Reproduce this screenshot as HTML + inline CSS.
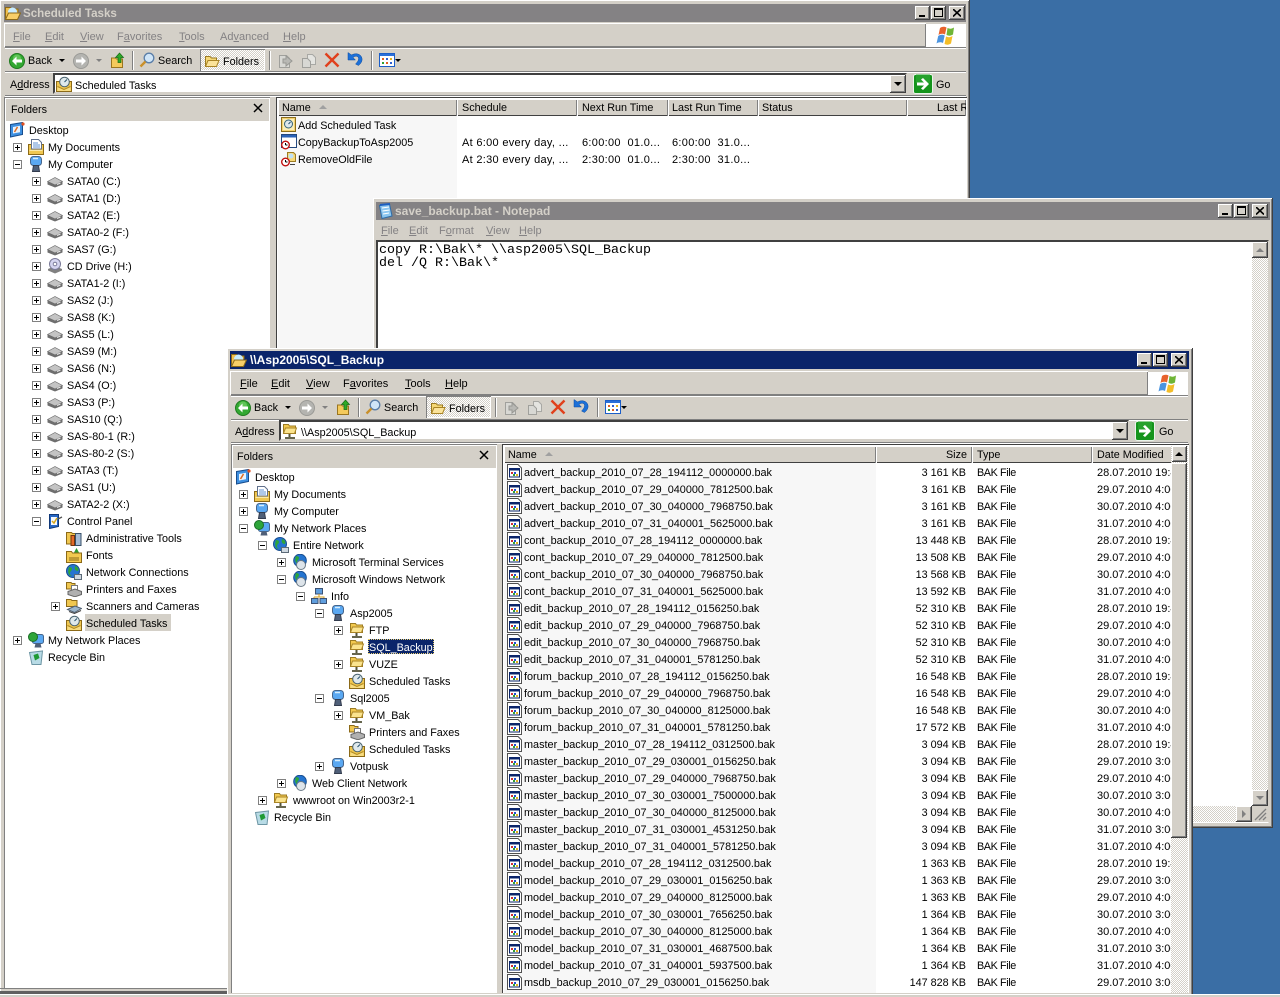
<!DOCTYPE html>
<html><head><meta charset="utf-8"><title>Scheduled Tasks</title>
<style>
html,body{margin:0;padding:0;width:1280px;height:997px;overflow:hidden;background:#3a6ea5}
body{position:relative;font:10.8px/13px "Liberation Sans",sans-serif;color:#000}
div,p,span,s,svg,b,em{position:absolute;display:block;margin:0;padding:0}
u{position:static;text-decoration:underline}
.o{left:0;top:0}
.a{background:#d4d0c8}
.fr{background:#d4d0c8;box-shadow:inset -1px -1px #404040,inset 1px 1px #fff,inset -2px -2px #808080}
.ti{left:4px;top:4px;height:18px}
.ti.in{background:#848284;color:#d4d0c8}
.ti.ac{background:#0a246a;color:#fff}
.tt{top:3px;font:bold 12px/13px "Liberation Sans",sans-serif;white-space:nowrap}
.btn{background:#d4d0c8;box-shadow:inset -1px -1px #404040,inset 1px 1px #fff,inset -2px -2px #808080}
.t{white-space:nowrap}
.m{font-size:11px}
.g{color:#848284}
.sc{font-size:11px;letter-spacing:.3px}
.hl{background:#808080;height:1px}
.wl{background:#fff;height:1px}
.vs{width:1px;background:#808080;box-shadow:1px 0 #fff}
svg{width:16px;height:16px;overflow:hidden}
.n{height:17px;width:1px}
.n s{left:-4px;top:4px;width:9px;height:9px;box-sizing:border-box;border:1px solid #808080;background:#fff}
.n s:before{content:"";position:absolute;left:1px;top:3px;width:5px;height:1px;background:#000}
.n s.p:after{content:"";position:absolute;left:3px;top:1px;width:1px;height:5px;background:#000}
.n svg{left:11px;top:0}
.n span{left:31px;top:3px;white-space:nowrap}
.c{top:99px;height:17px;background:#d4d0c8;box-shadow:inset 1px 1px #fff,inset -1px 0 #808080,inset 0 -1px #404040;overflow:hidden}
.c span{top:3px;white-space:nowrap}
.r{position:relative;height:17px;width:690px}
.r svg{left:3px;top:0;width:15px;height:16px}
.r span{top:3px;white-space:nowrap}
.nm{left:20px;font-size:10.87px}
.sz{left:362px;width:100px;text-align:right}
.ty{left:473px;letter-spacing:-.4px}
.dt{left:593px;width:74px;overflow:hidden;font-size:11px}
.ch{background:repeating-conic-gradient(#fff 0 25%,#d4d0c8 0 50%) 0 0/2px 2px}
.tri{border-style:solid;border-color:transparent;width:0;height:0}
</style></head><body>
<svg width="0" height="0" style="left:0;top:0;width:0;height:0">
<defs>
<symbol id="fopen" viewBox="0 0 16 16"><path d="M1.500 13.500V3.500h4.500l1.500 1.500h5v2.500" fill="#f6d876" stroke="#9c7b22"/><path d="M1.500 13.500l2.500-6h11l-2.500 6z" fill="#fbe39a" stroke="#a98426"/></symbol>
<symbol id="ftitle" viewBox="0 0 16 16"><path d="M.5 13.500V2.500h5l1.500 1.500h6v3" fill="#f0c050" stroke="#8c6a18"/><circle cx="7.500" cy="7" r="4.500" fill="#c8ecff"/><path d="M.5 14.500l3-6.500h12l-3 6.500z" fill="#f8cf68" stroke="#8c6a18"/></symbol>
<symbol id="net" viewBox="0 0 16 16"><path d="M1.500 10.500V1.500h5l1 1.500h6v7.500z" fill="#f2c94f" stroke="#9c7b22"/><path d="M1.500 10.500l2-5.500h11l-2 5.500z" fill="#fbe48e" stroke="#a98426"/><path d="M7.500 11v3" stroke="#55553a" stroke-width="2"/><path d="M3 15h10" stroke="#55553a" stroke-width="1.800"/></symbol>
<symbol id="task" viewBox="0 0 16 16"><path d="M.5 15.500V5.500h15v10z" fill="#f0c750" stroke="#8c6a18"/><circle cx="8.500" cy="6" r="4.800" fill="#dfe9ec" stroke="#4c6571"/><path d="M8.500 6l2.500-2.500" stroke="#27506e"/><path d="M1.500 11l6 3 7-3v4h-13z" fill="#f8dc80"/><path d="M1.500 10.500l6.500 3 6.500-3" fill="none" stroke="#b08a24"/></symbol>
<symbol id="desk" viewBox="0 0 16 16"><path d="M1.500 2.500l12-2v12l-12 2.500z" fill="#3d8fe0" stroke="#174c8c"/><path d="M4 5l7-1.200v6.500L4 11.500z" fill="#e8f2fc"/><path d="M5.500 10l3-5" stroke="#e06a20" stroke-width="1.500"/><circle cx="14" cy="2" r="1.600" fill="#e05020"/></symbol>
<symbol id="docs" viewBox="0 0 16 16"><path d="M.5 15.500V5.500h15v10z" fill="#f0c750" stroke="#8c6a18"/><path d="M3.500 10V.5h7l3 3V10z" fill="#fff" stroke="#60708c"/><path d="M5 4h5M5 6h7M5 8h7" stroke="#5f90d0"/><path d="M1.500 11h13v1h-13z" fill="#fbe9a8"/></symbol>
<symbol id="pc" viewBox="0 0 16 16"><rect x="2.500" y=".5" width="11" height="9" rx="3" fill="#5aa8f2" stroke="#45658c"/><path d="M5 2.500h5" stroke="#d8eefd" stroke-width="1.500"/><path d="M5.500 9.500h5l1 6h-7z" fill="#4f5f78" stroke="#333c4e"/></symbol>
<symbol id="drv" viewBox="0 0 16 16"><path d="M.5 9l7.500-3.500L15.500 9v2.500l-7.500 3-7.500-3z" fill="#6e6e6e"/><path d="M.5 8.500L8 4.500l7.500 4L8 12z" fill="#c4c4c4" stroke="#6e6e6e" stroke-width=".7"/><path d="M10 11.500l3.500-1.500" stroke="#e8e8e8"/></symbol>
<symbol id="cd" viewBox="0 0 16 16"><path d="M1 11l7-3 7 3v1.500l-7 3-7-3z" fill="#808080"/><circle cx="8" cy="6" r="5.500" fill="#d4d4f0" stroke="#7a7a98"/><circle cx="8" cy="6" r="1.800" fill="#fff" stroke="#7a7a98"/></symbol>
<symbol id="cp" viewBox="0 0 16 16"><path d="M2.500 1.500h9v12l-9 2z" fill="#2666c4" stroke="#103878"/><path d="M4 4h6v8H4z" fill="#f4f8fd"/><path d="M5 8l2 2 3-5" stroke="#d8a81c" stroke-width="1.500" fill="none"/><path d="M11 6l4-2" stroke="#555" stroke-width="1.300"/></symbol>
<symbol id="adm" viewBox="0 0 16 16"><path d="M.5 14V2.500h5l1 1h8V14z" fill="#f0c750" stroke="#8c6a18"/><rect x="5" y="5.500" width="3.500" height="10" fill="#e46a28" stroke="#70340e"/><rect x="9.500" y="3.500" width="5.500" height="12" fill="#a6bcd4" stroke="#38506a"/></symbol>
<symbol id="fnt" viewBox="0 0 16 16"><path d="M.5 15.500V4.500h5l1 1.500h9v9.500z" fill="#f2c94f" stroke="#8c6a18"/><path d="M3 11h10M3 13h10" stroke="#8c6a18"/><path d="M10.500 1l2.500 4.500H8z" fill="#2f9b2f"/></symbol>
<symbol id="glb" viewBox="0 0 16 16"><circle cx="7" cy="7" r="6.500" fill="#2474d0" stroke="#1a4f90"/><path d="M3 3c3 0 4 2 2 4s-1 4 1 5c-3 0-5-3-3-9zM9 2c3 1 4 3 3 5-2 0-4-1-3-5z" fill="#2ea53a"/><path d="M8.500 10.500h7v5h-7z" fill="#cfd8e0" stroke="#5c6a78"/></symbol>
<symbol id="prn" viewBox="0 0 16 16"><path d="M.5 8V1.500h4.500l1 1h3V8z" fill="#f0c750" stroke="#8c6a18"/><path d="M5.500 4.500h6v6h-6z" fill="#fff" stroke="#777"/><path d="M2 10.500l7-2.500 6.500 2.500v3L9 15.800l-7-2.300z" fill="#b0b0b0" stroke="#666"/></symbol>
<symbol id="scn" viewBox="0 0 16 16"><path d="M.5 8.500V1.500h4.500l1 1h5v6z" fill="#f0c750" stroke="#8c6a18"/><path d="M1.500 11.500l7.500-3.500 6.500 2.500-7 4z" fill="#9cb6cc" stroke="#4f6072"/><path d="M3 13.500l5.500 2 6.500-3" stroke="#444" fill="none"/></symbol>
<symbol id="npl" viewBox="0 0 16 16"><rect x="4.500" y="2.500" width="11" height="9" rx="2" fill="#5aa8f2" stroke="#45658c"/><circle cx="5" cy="5" r="4.500" fill="#2ea53a" stroke="#1b6e27"/><path d="M7.500 11.500h5l1 4h-7z" fill="#4f5f78"/></symbol>
<symbol id="rec" viewBox="0 0 16 16"><path d="M1.500 3.500l13-1.500-1.500 13.500h-9z" fill="#b8dbe6" stroke="#6d96a4"/><path d="M5.500 6l4.500-1.500 1.500 4.500-4.500 2.500z" fill="#1f9a34"/></symbol>
<symbol id="wg" viewBox="0 0 16 16"><rect x="4.500" y=".5" width="7" height="5.500" fill="#5f9ede" stroke="#3c5172"/><path d="M8 6v3M3 9h10v2M3 9v2" stroke="#d9a21f" fill="none"/><rect x=".5" y="10.500" width="6.500" height="5" fill="#5f9ede" stroke="#3c5172"/><rect x="9" y="10.500" width="6.500" height="5" fill="#5f9ede" stroke="#3c5172"/></symbol>
<symbol id="wcn" viewBox="0 0 16 16"><circle cx="8" cy="6.500" r="6.300" fill="#2474d0" stroke="#1a4f90"/><path d="M4 2c3 0 4 2 2 4s-1 3 1 4c-3 0-5-3-3-8z" fill="#2ea53a"/><ellipse cx="9" cy="11" rx="4.500" ry="4.500" fill="#dde4ea" stroke="#6c7b88"/></symbol>
<symbol id="bak" viewBox="0 0 15 16"><path d="M.5.500h10.500l3.500 3.500v11.500H.5z" fill="#fff" stroke="#505050"/><rect x="2.500" y="4.500" width="10" height="8.500" fill="#fff" stroke="#0a246a"/><rect x="2" y="4" width="11" height="2.500" fill="#0a246a"/><rect x="4" y="8" width="2" height="2" fill="#d03030"/><rect x="7" y="8" width="2" height="2" fill="#2050d0"/><rect x="6" y="10" width="2" height="2" fill="#30a030"/><rect x="9" y="10" width="2" height="2" fill="#e0b020"/></symbol>
<symbol id="jobnew" viewBox="0 0 16 16"><path d="M.5 1.500h14v14H.5z" fill="#f3d271" stroke="#8b6d1a"/><rect x="2" y="3" width="11" height="11" fill="#fbeeb8"/><circle cx="7.500" cy="8" r="4" fill="#dde8ec" stroke="#33627a"/><path d="M7.500 8l2-2" stroke="#27506e"/></symbol>
<symbol id="job" viewBox="0 0 16 16"><rect x=".5" y=".5" width="15" height="13" fill="#fff" stroke="#23487e"/><rect x="1" y="1" width="14" height="2.500" fill="#2a62b8"/><circle cx="4.500" cy="11" r="3.800" fill="#fff" stroke="#c01010" stroke-width="1.400"/><path d="M4.500 11V9M4.500 11h2" stroke="#000"/></symbol>
<symbol id="job2" viewBox="0 0 16 16"><path d="M6.500 1.500h6l2 2v7h-8z" fill="#f6d876" stroke="#9c7b22"/><circle cx="10" cy="5" r="2.500" fill="#bfe0f5"/><path d="M9 13.500h5" stroke="#404040"/><circle cx="4.500" cy="11" r="3.800" fill="#fff" stroke="#c01010" stroke-width="1.400"/><path d="M4.500 11V9M4.500 11h2" stroke="#000"/></symbol>
<symbol id="back" viewBox="0 0 16 16"><circle cx="8" cy="8" r="7.500" fill="#33a832" stroke="#1f7a1f"/><circle cx="8" cy="5.500" r="4" fill="#7fd870" opacity=".6"/><path d="M3 8l4.500-4.500V6.500H13v3H7.500v3z" fill="#fff"/></symbol>
<symbol id="fwd" viewBox="0 0 16 16"><circle cx="8" cy="8" r="7.500" fill="#b4b4b0" stroke="#9a9a96"/><path d="M13 8L8.500 3.500V6.500H3v3h5.500v3z" fill="#fff"/></symbol>
<symbol id="up" viewBox="0 0 16 16"><path d="M1.500 15.500V6h4l1 1h6v8.500z" fill="#f4ca5c" stroke="#9a7520"/><path d="M9.500 1l4 4.500H11v5H8v-5H5.500z" fill="#2eaa28" stroke="#156b12" stroke-width=".7"/></symbol>
<symbol id="srch" viewBox="0 0 16 16"><circle cx="10" cy="6" r="4.800" fill="#cfe5f8" stroke="#5a7ea8" stroke-width="1.300"/><path d="M1.500 14.500l5-5" stroke="#c9902a" stroke-width="2.400"/></symbol>
<symbol id="mv" viewBox="0 0 16 16"><path d="M2.500 2.500h7l3 3v9h-10z" fill="#d8d8d4" stroke="#a0a09c"/><path d="M6 6h3V3l6 5-6 5v-3H6z" fill="#b8b8b4" stroke="#989894"/></symbol>
<symbol id="cpy" viewBox="0 0 16 16"><path d="M6.500 1.500h5l3 3v7h-8z" fill="#e4e4e0" stroke="#a8a8a4"/><path d="M1.500 5.500h5l3 3v6h-8z" fill="#d8d8d4" stroke="#a0a09c"/></symbol>
<symbol id="del" viewBox="0 0 16 16"><path d="M1.500 1.500L14.500 14.500M14.500 1.500L1.500 14.500" stroke="#e0401c" stroke-width="2.400"/></symbol>
<symbol id="und" viewBox="0 0 16 16"><path d="M1 1.500v7.500h7.500L6 6.500C8 4.500 11 5 11.500 7c.4 2-1 4-3 6l3 1.500c3-2.500 4.500-5.500 3-8.500C13 2.500 8 1.800 4.500 4z" fill="#1c70d8" stroke="#0e4a9c" stroke-width=".5"/></symbol>
<symbol id="vw" viewBox="0 0 16 16"><rect x=".5" y="1.500" width="15" height="13" fill="#fff" stroke="#1c5ec8"/><rect x="1" y="2" width="14" height="2" fill="#2a6fd8"/><path d="M3 6h2v2H3z" fill="#e06020"/><path d="M7 6h2v2H7z" fill="#3060d0"/><path d="M11 6h2v2h-2z" fill="#e0b020"/><path d="M3 10h2v2H3z" fill="#30a030"/><path d="M7 10h2v2H7z" fill="#e06020"/><path d="M11 10h2v2h-2z" fill="#3060d0"/></symbol>
<symbol id="flag" viewBox="0 0 24 24"><path d="M5 4c2.500-1.500 4-1.500 6.500-.5L10 10.500c-2.500-1-4-1-6.500.5z" fill="#e8622c"/><path d="M12.500 4c2.500 1 4 1 6.500-.5L18 10.500c-2.500 1.500-4 1.500-6.500.5z" fill="#6fb536"/><path d="M3.200 12c2.500-1.500 4-1.500 6.500-.5L8 19c-2.500-1-4-1-6.500.5z" fill="#4b94e0"/><path d="M11 12.500c2.500 1 4 1 6.500-.5L16 19.500c-2.500 1.500-4 1.500-6.500.5z" fill="#f4bd28"/></symbol>
<symbol id="go" viewBox="0 0 20 20"><rect x=".5" y=".5" width="19" height="19" rx="2" fill="#15941c" stroke="#eaf4ea"/><path d="M3 0h14v9H3z" fill="#36b03c" opacity=".5"/><path d="M4 8.500h7L8 5.500 10 4l6 6-6 6-2-1.500 3-3H4z" fill="#fff"/></symbol>
<symbol id="np" viewBox="0 0 16 16"><path d="M1.500 2.500l10-1.500 2.500 12-10 2.500z" fill="#8cc6f0" stroke="#2f6ca8"/><path d="M2 2l10-1" stroke="#1c5ec0" stroke-width="2"/><path d="M4 5l7-1M4.500 8l7-1M5 11l6-1" stroke="#fff"/></symbol>
</defs></svg>

<!-- WINDOW 1 -->
<div class="o">
<div class="fr" style="left:0;top:0;width:970px;height:995px"></div>
<div class="ti in" style="width:962px"><svg style="left:1px;top:1px"><use href="#ftitle"/></svg><span class="tt" style="left:19px;font-size:11.6px">Scheduled Tasks</span></div>
<div class="btn" style="left:915px;top:6px;width:15px;height:14px"><b style="left:4px;top:9px;width:6px;height:2px;background:#000"></b></div>
<div class="btn" style="left:931px;top:6px;width:15px;height:14px"><b style="left:3px;top:2px;width:7px;height:6px;border:1px solid #000;border-top-width:2px"></b></div>
<div class="btn" style="left:949px;top:6px;width:16px;height:14px"><svg style="left:4px;top:3px;width:8px;height:8px" viewBox="0 0 8 8"><path d="M0 0l8 7.500M8 0L0 7.500" stroke="#000" stroke-width="1.600"/></svg></div>

<div style="left:4px;top:23px;width:922px;height:24px;box-shadow:inset 1px 1px #fff,inset -1px -1px #808080"></div>
<div style="left:926px;top:24px;width:40px;height:23px;background:#fff"><svg style="left:9px;top:0;width:24px;height:24px"><use href="#flag"/></svg></div>
<p class="t g m" style="left:13px;top:31px"><u>F</u>ile</p>
<p class="t g m" style="left:45px;top:31px"><u>E</u>dit</p>
<p class="t g m" style="left:80px;top:31px"><u>V</u>iew</p>
<p class="t g m" style="left:117px;top:31px">F<u>a</u>vorites</p>
<p class="t g m" style="left:179px;top:31px"><u>T</u>ools</p>
<p class="t g m" style="left:220px;top:31px">Ad<u>v</u>anced</p>
<p class="t g m" style="left:283px;top:31px"><u>H</u>elp</p>

<div class="hl" style="left:5px;top:47px;width:961px"></div><div class="wl" style="left:5px;top:48px;width:961px"></div>
<svg style="left:9px;top:53px"><use href="#back"/></svg><p class="t" style="left:28px;top:55px">Back</p>
<div class="tri" style="left:59px;top:59px;border-width:3px 3px 0;border-top-color:#000"></div>
<svg style="left:73px;top:53px"><use href="#fwd"/></svg>
<div class="tri" style="left:96px;top:59px;border-width:3px 3px 0;border-top-color:#808080"></div>
<svg style="left:110px;top:52px"><use href="#up"/></svg>
<div class="vs" style="left:132px;top:51px;height:19px"></div>
<svg style="left:139px;top:52px"><use href="#srch"/></svg><p class="t" style="left:158px;top:55px">Search</p>
<div class="ch" style="left:200px;top:49px;width:65px;height:22px;box-shadow:inset 1px 1px #808080,inset -1px -1px #fff"></div>
<svg style="left:204px;top:53px"><use href="#fopen"/></svg><p class="t" style="left:223px;top:56px">Folders</p>
<div class="vs" style="left:269px;top:51px;height:19px"></div>
<svg style="left:277px;top:53px"><use href="#mv"/></svg><svg style="left:301px;top:53px"><use href="#cpy"/></svg>
<svg style="left:324px;top:52px"><use href="#del"/></svg><svg style="left:347px;top:51px"><use href="#und"/></svg>
<div class="vs" style="left:371px;top:51px;height:19px"></div>
<svg style="left:379px;top:52px"><use href="#vw"/></svg>
<div class="tri" style="left:395px;top:59px;border-width:3px 3px 0;border-top-color:#000"></div>

<div class="hl" style="left:5px;top:71px;width:961px"></div><div class="wl" style="left:5px;top:72px;width:961px"></div>
<p class="t" style="left:10px;top:79px">A<u>d</u>dress</p>
<div style="left:53px;top:73px;width:854px;height:21px;box-sizing:border-box;background:#fff;border:2px solid #404040;border-right-color:#d4d0c8;border-bottom-color:#d4d0c8"></div>
<svg style="left:56px;top:76px"><use href="#task"/></svg><p class="t" style="left:75px;top:80px">Scheduled Tasks</p>
<div class="btn" style="left:890px;top:75px;width:16px;height:18px"><div class="tri" style="left:4px;top:7px;border-width:4px 4px 0;border-top-color:#000"></div></div>
<svg style="left:913px;top:74px;width:20px;height:20px"><use href="#go"/></svg><p class="t" style="left:936px;top:79px">Go</p>
<div class="hl" style="left:5px;top:95px;width:961px"></div><div class="wl" style="left:5px;top:96px;width:961px"></div>

<!-- folders pane -->
<div style="left:4px;top:97px;width:266px;height:892px;background:#fff;box-shadow:inset 1px 1px #808080"></div>
<div class="a" style="left:5px;top:98px;width:264px;height:23px;box-shadow:inset 1px 1px #fff"></div>
<p class="t" style="left:11px;top:104px">Folders</p>
<svg style="left:253px;top:103px;width:10px;height:10px" viewBox="0 0 10 10"><path d="M1 1l8 8M9 1L1 9" stroke="#000" stroke-width="1.500"/></svg>
<div class="hl" style="left:0;top:988px;width:230px"></div>
<div style="left:0;top:991px;width:230px;height:3px;background:#606060"></div>

<div class="n" style="left:-2px;top:122px"><svg><use href="#desk"/></svg><span>Desktop</span></div>
<div class="n" style="left:17px;top:139px"><s class="p"></s><svg><use href="#docs"/></svg><span>My Documents</span></div>
<div class="n" style="left:17px;top:156px"><s></s><svg><use href="#pc"/></svg><span>My Computer</span></div>
<div class="n" style="left:36px;top:173px"><s class="p"></s><svg><use href="#drv"/></svg><span>SATA0 (C:)</span></div>
<div class="n" style="left:36px;top:190px"><s class="p"></s><svg><use href="#drv"/></svg><span>SATA1 (D:)</span></div>
<div class="n" style="left:36px;top:207px"><s class="p"></s><svg><use href="#drv"/></svg><span>SATA2 (E:)</span></div>
<div class="n" style="left:36px;top:224px"><s class="p"></s><svg><use href="#drv"/></svg><span>SATA0-2 (F:)</span></div>
<div class="n" style="left:36px;top:241px"><s class="p"></s><svg><use href="#drv"/></svg><span>SAS7 (G:)</span></div>
<div class="n" style="left:36px;top:258px"><s class="p"></s><svg><use href="#cd"/></svg><span>CD Drive (H:)</span></div>
<div class="n" style="left:36px;top:275px"><s class="p"></s><svg><use href="#drv"/></svg><span>SATA1-2 (I:)</span></div>
<div class="n" style="left:36px;top:292px"><s class="p"></s><svg><use href="#drv"/></svg><span>SAS2 (J:)</span></div>
<div class="n" style="left:36px;top:309px"><s class="p"></s><svg><use href="#drv"/></svg><span>SAS8 (K:)</span></div>
<div class="n" style="left:36px;top:326px"><s class="p"></s><svg><use href="#drv"/></svg><span>SAS5 (L:)</span></div>
<div class="n" style="left:36px;top:343px"><s class="p"></s><svg><use href="#drv"/></svg><span>SAS9 (M:)</span></div>
<div class="n" style="left:36px;top:360px"><s class="p"></s><svg><use href="#drv"/></svg><span>SAS6 (N:)</span></div>
<div class="n" style="left:36px;top:377px"><s class="p"></s><svg><use href="#drv"/></svg><span>SAS4 (O:)</span></div>
<div class="n" style="left:36px;top:394px"><s class="p"></s><svg><use href="#drv"/></svg><span>SAS3 (P:)</span></div>
<div class="n" style="left:36px;top:411px"><s class="p"></s><svg><use href="#drv"/></svg><span>SAS10 (Q:)</span></div>
<div class="n" style="left:36px;top:428px"><s class="p"></s><svg><use href="#drv"/></svg><span>SAS-80-1 (R:)</span></div>
<div class="n" style="left:36px;top:445px"><s class="p"></s><svg><use href="#drv"/></svg><span>SAS-80-2 (S:)</span></div>
<div class="n" style="left:36px;top:462px"><s class="p"></s><svg><use href="#drv"/></svg><span>SATA3 (T:)</span></div>
<div class="n" style="left:36px;top:479px"><s class="p"></s><svg><use href="#drv"/></svg><span>SAS1 (U:)</span></div>
<div class="n" style="left:36px;top:496px"><s class="p"></s><svg><use href="#drv"/></svg><span>SATA2-2 (X:)</span></div>
<div class="n" style="left:36px;top:513px"><s></s><svg><use href="#cp"/></svg><span>Control Panel</span></div>
<div class="n" style="left:55px;top:530px"><svg><use href="#adm"/></svg><span>Administrative Tools</span></div>
<div class="n" style="left:55px;top:547px"><svg><use href="#fnt"/></svg><span>Fonts</span></div>
<div class="n" style="left:55px;top:564px"><svg><use href="#glb"/></svg><span>Network Connections</span></div>
<div class="n" style="left:55px;top:581px"><svg><use href="#prn"/></svg><span>Printers and Faxes</span></div>
<div class="n" style="left:55px;top:598px"><s class="p"></s><svg><use href="#scn"/></svg><span>Scanners and Cameras</span></div>
<div class="a" style="left:85px;top:614px;width:86px;height:17px"></div>
<div class="n" style="left:55px;top:615px"><svg><use href="#task"/></svg><span>Scheduled Tasks</span></div>
<div class="n" style="left:17px;top:632px"><s class="p"></s><svg><use href="#npl"/></svg><span>My Network Places</span></div>
<div class="n" style="left:17px;top:649px"><svg><use href="#rec"/></svg><span>Recycle Bin</span></div>

<!-- list pane -->
<div style="left:276px;top:97px;width:691px;height:892px;background:#fff;box-shadow:inset 1px 1px #404040"></div>
<div style="left:278px;top:99px;width:179px;height:880px;background:#f7f7f7"></div>
<div class="c" style="left:278px;width:179px"><span style="left:4px">Name</span><div class="tri" style="left:41px;top:6px;border-width:0 4px 4px;border-bottom-color:#a0a0a0"></div></div>
<div class="c" style="left:457px;width:120px"><span style="left:5px">Schedule</span></div>
<div class="c" style="left:577px;width:91px"><span style="left:5px">Next Run Time</span></div>
<div class="c" style="left:668px;width:90px"><span style="left:4px">Last Run Time</span></div>
<div class="c" style="left:758px;width:149px"><span style="left:4px">Status</span></div>
<div class="c" style="left:907px;width:59px"><span style="left:30px">Last Run Result</span></div>
<svg style="left:281px;top:116px"><use href="#jobnew"/></svg><p class="t" style="left:298px;top:120px">Add Scheduled Task</p>
<svg style="left:281px;top:134px"><use href="#job"/></svg><p class="t" style="left:298px;top:137px">CopyBackupToAsp2005</p>
<svg style="left:281px;top:151px"><use href="#job2"/></svg><p class="t" style="left:298px;top:154px">RemoveOldFile</p>
<p class="t sc" style="left:462px;top:137px">At 6:00 every day, ...</p><p class="t sc" style="left:582px;top:137px">6:00:00&nbsp; 01.0...</p><p class="t sc" style="left:672px;top:137px">6:00:00&nbsp; 31.0...</p>
<p class="t sc" style="left:462px;top:154px">At 2:30 every day, ...</p><p class="t sc" style="left:582px;top:154px">2:30:00&nbsp; 01.0...</p><p class="t sc" style="left:672px;top:154px">2:30:00&nbsp; 31.0...</p>
</div>

<!-- NOTEPAD -->
<div class="fr" style="left:373px;top:198px;width:900px;height:630px"></div>
<div class="ti in" style="left:376px;top:202px;width:894px"><svg style="left:2px;top:1px"><use href="#np"/></svg><span class="tt" style="left:19px">save_backup.bat - Notepad</span></div>
<div class="btn" style="left:1218px;top:204px;width:15px;height:14px"><b style="left:4px;top:9px;width:6px;height:2px;background:#000"></b></div>
<div class="btn" style="left:1234px;top:204px;width:15px;height:14px"><b style="left:3px;top:2px;width:7px;height:6px;border:1px solid #000;border-top-width:2px"></b></div>
<div class="btn" style="left:1252px;top:204px;width:16px;height:14px"><svg style="left:4px;top:3px;width:8px;height:8px" viewBox="0 0 8 8"><path d="M0 0l8 7.500M8 0L0 7.500" stroke="#000" stroke-width="1.600"/></svg></div>
<p class="t g m" style="left:381px;top:225px"><u>F</u>ile</p>
<p class="t g m" style="left:409px;top:225px"><u>E</u>dit</p>
<p class="t g m" style="left:439px;top:225px">F<u>o</u>rmat</p>
<p class="t g m" style="left:486px;top:225px"><u>V</u>iew</p>
<p class="t g m" style="left:519px;top:225px"><u>H</u>elp</p>
<div style="left:376px;top:240px;width:893px;height:583px;box-sizing:border-box;background:#fff;border:2px solid #404040;border-right-color:#d4d0c8;border-bottom-color:#fff"></div>
<pre style="position:absolute;left:379px;top:244px;margin:0;font:13.330px/13px 'Liberation Mono',monospace">copy R:\Bak\* \\asp2005\SQL_Backup
del /Q R:\Bak\*</pre>
<div class="ch" style="left:1252px;top:258px;width:16px;height:532px"></div>
<div class="btn" style="left:1252px;top:242px;width:16px;height:16px"><div class="tri" style="left:4px;top:6px;border-width:0 4px 4px;border-bottom-color:#808080"></div></div>
<div class="btn" style="left:1252px;top:790px;width:16px;height:16px"><div class="tri" style="left:4px;top:6px;border-width:4px 4px 0;border-top-color:#808080"></div></div>
<div class="ch" style="left:378px;top:806px;width:858px;height:16px"></div>
<div class="btn" style="left:1236px;top:806px;width:16px;height:16px"><div class="tri" style="left:6px;top:4px;border-width:4px 0 4px 4px;border-left-color:#808080"></div></div>
<div class="a" style="left:1252px;top:806px;width:16px;height:16px"><svg style="left:2px;top:2px;width:14px;height:14px" viewBox="0 0 14 14"><path d="M1 12L12 1M5 12L12 5M9 12L12 9" stroke="#808080" stroke-width="1.300"/></svg></div>

<!-- WINDOW 3 -->
<div class="o" style="left:226px;top:347px">
<div class="fr" style="left:1px;top:1px;width:966px;height:648px"></div>
<div class="ti ac" style="width:959px"><svg style="left:1px;top:1px"><use href="#ftitle"/></svg><span class="tt" style="left:20px">\\Asp2005\SQL_Backup</span></div>
<div class="btn" style="left:911px;top:6px;width:15px;height:14px"><b style="left:4px;top:9px;width:6px;height:2px;background:#000"></b></div>
<div class="btn" style="left:927px;top:6px;width:15px;height:14px"><b style="left:3px;top:2px;width:7px;height:6px;border:1px solid #000;border-top-width:2px"></b></div>
<div class="btn" style="left:945px;top:6px;width:16px;height:14px"><svg style="left:4px;top:3px;width:8px;height:8px" viewBox="0 0 8 8"><path d="M0 0l8 7.500M8 0L0 7.500" stroke="#000" stroke-width="1.600"/></svg></div>

<div style="left:4px;top:24px;width:918px;height:24px;box-shadow:inset 1px 1px #fff,inset -1px -1px #808080"></div>
<div style="left:922px;top:25px;width:40px;height:23px;background:#fff"><svg style="left:9px;top:0;width:24px;height:24px"><use href="#flag"/></svg></div>
<p class="t m" style="left:14px;top:31px"><u>F</u>ile</p>
<p class="t m" style="left:45px;top:31px"><u>E</u>dit</p>
<p class="t m" style="left:80px;top:31px"><u>V</u>iew</p>
<p class="t m" style="left:117px;top:31px">F<u>a</u>vorites</p>
<p class="t m" style="left:179px;top:31px"><u>T</u>ools</p>
<p class="t m" style="left:219px;top:31px"><u>H</u>elp</p>

<div class="hl" style="left:5px;top:48px;width:957px"></div><div class="wl" style="left:5px;top:49px;width:957px"></div>
<svg style="left:9px;top:53px"><use href="#back"/></svg><p class="t" style="left:28px;top:55px">Back</p>
<div class="tri" style="left:59px;top:59px;border-width:3px 3px 0;border-top-color:#000"></div>
<svg style="left:73px;top:53px"><use href="#fwd"/></svg>
<div class="tri" style="left:96px;top:59px;border-width:3px 3px 0;border-top-color:#808080"></div>
<svg style="left:110px;top:52px"><use href="#up"/></svg>
<div class="vs" style="left:132px;top:51px;height:19px"></div>
<svg style="left:139px;top:52px"><use href="#srch"/></svg><p class="t" style="left:158px;top:55px">Search</p>
<div class="ch" style="left:200px;top:49px;width:65px;height:22px;box-shadow:inset 1px 1px #808080,inset -1px -1px #fff"></div>
<svg style="left:204px;top:53px"><use href="#fopen"/></svg><p class="t" style="left:223px;top:56px">Folders</p>
<div class="vs" style="left:269px;top:51px;height:19px"></div>
<svg style="left:277px;top:53px"><use href="#mv"/></svg><svg style="left:301px;top:53px"><use href="#cpy"/></svg>
<svg style="left:324px;top:52px"><use href="#del"/></svg><svg style="left:347px;top:51px"><use href="#und"/></svg>
<div class="vs" style="left:371px;top:51px;height:19px"></div>
<svg style="left:379px;top:52px"><use href="#vw"/></svg>
<div class="tri" style="left:395px;top:59px;border-width:3px 3px 0;border-top-color:#000"></div>

<div class="hl" style="left:5px;top:72px;width:957px"></div><div class="wl" style="left:5px;top:73px;width:957px"></div>
<p class="t" style="left:9px;top:79px">A<u>d</u>dress</p>
<div style="left:53px;top:73px;width:850px;height:21px;box-sizing:border-box;background:#fff;border:2px solid #404040;border-right-color:#d4d0c8;border-bottom-color:#d4d0c8"></div>
<svg style="left:56px;top:76px"><use href="#net"/></svg><p class="t" style="left:75px;top:80px">\\Asp2005\SQL_Backup</p>
<div class="btn" style="left:886px;top:75px;width:16px;height:18px"><div class="tri" style="left:4px;top:7px;border-width:4px 4px 0;border-top-color:#000"></div></div>
<svg style="left:909px;top:74px;width:20px;height:20px"><use href="#go"/></svg><p class="t" style="left:933px;top:79px">Go</p>
<div class="hl" style="left:5px;top:95px;width:957px"></div><div class="wl" style="left:5px;top:96px;width:957px"></div>

<div style="left:5px;top:97px;width:266px;height:549px;background:#fff;box-shadow:inset 1px 1px #808080"></div>
<div class="a" style="left:6px;top:98px;width:264px;height:23px;box-shadow:inset 1px 1px #fff"></div>
<p class="t" style="left:11px;top:104px">Folders</p>
<svg style="left:253px;top:103px;width:10px;height:10px" viewBox="0 0 10 10"><path d="M1 1l8 8M9 1L1 9" stroke="#000" stroke-width="1.500"/></svg>

<div class="n" style="left:-2px;top:122px"><svg><use href="#desk"/></svg><span>Desktop</span></div>
<div class="n" style="left:17px;top:139px"><s class="p"></s><svg><use href="#docs"/></svg><span>My Documents</span></div>
<div class="n" style="left:17px;top:156px"><s class="p"></s><svg><use href="#pc"/></svg><span>My Computer</span></div>
<div class="n" style="left:17px;top:173px"><s></s><svg><use href="#npl"/></svg><span>My Network Places</span></div>
<div class="n" style="left:36px;top:190px"><s></s><svg><use href="#glb"/></svg><span>Entire Network</span></div>
<div class="n" style="left:55px;top:207px"><s class="p"></s><svg><use href="#wcn"/></svg><span>Microsoft Terminal Services</span></div>
<div class="n" style="left:55px;top:224px"><s></s><svg><use href="#wcn"/></svg><span>Microsoft Windows Network</span></div>
<div class="n" style="left:74px;top:241px"><s></s><svg><use href="#wg"/></svg><span>Info</span></div>
<div class="n" style="left:93px;top:258px"><s></s><svg><use href="#pc"/></svg><span>Asp2005</span></div>
<div class="n" style="left:112px;top:275px"><s class="p"></s><svg><use href="#net"/></svg><span>FTP</span></div>
<div style="left:142px;top:292px;width:66px;height:15px;box-sizing:border-box;background:#0a246a;border:1px dotted #e8d070"></div>
<div class="n" style="left:112px;top:292px"><svg><use href="#net"/></svg><span style="color:#fff">SQL_Backup</span></div>
<div class="n" style="left:112px;top:309px"><s class="p"></s><svg><use href="#net"/></svg><span>VUZE</span></div>
<div class="n" style="left:112px;top:326px"><svg><use href="#task"/></svg><span>Scheduled Tasks</span></div>
<div class="n" style="left:93px;top:343px"><s></s><svg><use href="#pc"/></svg><span>Sql2005</span></div>
<div class="n" style="left:112px;top:360px"><s class="p"></s><svg><use href="#net"/></svg><span>VM_Bak</span></div>
<div class="n" style="left:112px;top:377px"><svg><use href="#prn"/></svg><span>Printers and Faxes</span></div>
<div class="n" style="left:112px;top:394px"><svg><use href="#task"/></svg><span>Scheduled Tasks</span></div>
<div class="n" style="left:93px;top:411px"><s class="p"></s><svg><use href="#pc"/></svg><span>Votpusk</span></div>
<div class="n" style="left:55px;top:428px"><s class="p"></s><svg><use href="#wcn"/></svg><span>Web Client Network</span></div>
<div class="n" style="left:36px;top:445px"><s class="p"></s><svg><use href="#net"/></svg><span>wwwroot on Win2003r2-1</span></div>
<div class="n" style="left:17px;top:462px"><svg><use href="#rec"/></svg><span>Recycle Bin</span></div>

<div style="left:276px;top:97px;width:687px;height:549px;background:#fff;box-shadow:inset 1px 1px #404040"></div>
<div style="left:278px;top:99px;width:372px;height:547px;background:#f7f7f7"></div>
<div class="c" style="left:278px;width:372px"><span style="left:4px">Name</span><div class="tri" style="left:41px;top:6px;border-width:0 4px 4px;border-bottom-color:#a0a0a0"></div></div>
<div class="c" style="left:650px;width:96px"><span style="right:5px">Size</span></div>
<div class="c" style="left:746px;width:120px"><span style="left:5px">Type</span></div>
<div class="c" style="left:866px;width:80px"><span style="left:5px">Date Modified</span></div>

<div style="left:278px;top:117px;width:667px;height:529px;overflow:hidden">
<div class="r"><svg><use href="#bak"/></svg><span class="nm">advert_backup_2010_07_28_194112_0000000.bak</span><span class="sz">3 161 KB</span><span class="ty">BAK File</span><span class="dt">28.07.2010 19:41</span></div>
<div class="r"><svg><use href="#bak"/></svg><span class="nm">advert_backup_2010_07_29_040000_7812500.bak</span><span class="sz">3 161 KB</span><span class="ty">BAK File</span><span class="dt">29.07.2010 4:00</span></div>
<div class="r"><svg><use href="#bak"/></svg><span class="nm">advert_backup_2010_07_30_040000_7968750.bak</span><span class="sz">3 161 KB</span><span class="ty">BAK File</span><span class="dt">30.07.2010 4:00</span></div>
<div class="r"><svg><use href="#bak"/></svg><span class="nm">advert_backup_2010_07_31_040001_5625000.bak</span><span class="sz">3 161 KB</span><span class="ty">BAK File</span><span class="dt">31.07.2010 4:00</span></div>
<div class="r"><svg><use href="#bak"/></svg><span class="nm">cont_backup_2010_07_28_194112_0000000.bak</span><span class="sz">13 448 KB</span><span class="ty">BAK File</span><span class="dt">28.07.2010 19:41</span></div>
<div class="r"><svg><use href="#bak"/></svg><span class="nm">cont_backup_2010_07_29_040000_7812500.bak</span><span class="sz">13 508 KB</span><span class="ty">BAK File</span><span class="dt">29.07.2010 4:00</span></div>
<div class="r"><svg><use href="#bak"/></svg><span class="nm">cont_backup_2010_07_30_040000_7968750.bak</span><span class="sz">13 568 KB</span><span class="ty">BAK File</span><span class="dt">30.07.2010 4:00</span></div>
<div class="r"><svg><use href="#bak"/></svg><span class="nm">cont_backup_2010_07_31_040001_5625000.bak</span><span class="sz">13 592 KB</span><span class="ty">BAK File</span><span class="dt">31.07.2010 4:00</span></div>
<div class="r"><svg><use href="#bak"/></svg><span class="nm">edit_backup_2010_07_28_194112_0156250.bak</span><span class="sz">52 310 KB</span><span class="ty">BAK File</span><span class="dt">28.07.2010 19:41</span></div>
<div class="r"><svg><use href="#bak"/></svg><span class="nm">edit_backup_2010_07_29_040000_7968750.bak</span><span class="sz">52 310 KB</span><span class="ty">BAK File</span><span class="dt">29.07.2010 4:00</span></div>
<div class="r"><svg><use href="#bak"/></svg><span class="nm">edit_backup_2010_07_30_040000_7968750.bak</span><span class="sz">52 310 KB</span><span class="ty">BAK File</span><span class="dt">30.07.2010 4:00</span></div>
<div class="r"><svg><use href="#bak"/></svg><span class="nm">edit_backup_2010_07_31_040001_5781250.bak</span><span class="sz">52 310 KB</span><span class="ty">BAK File</span><span class="dt">31.07.2010 4:00</span></div>
<div class="r"><svg><use href="#bak"/></svg><span class="nm">forum_backup_2010_07_28_194112_0156250.bak</span><span class="sz">16 548 KB</span><span class="ty">BAK File</span><span class="dt">28.07.2010 19:41</span></div>
<div class="r"><svg><use href="#bak"/></svg><span class="nm">forum_backup_2010_07_29_040000_7968750.bak</span><span class="sz">16 548 KB</span><span class="ty">BAK File</span><span class="dt">29.07.2010 4:00</span></div>
<div class="r"><svg><use href="#bak"/></svg><span class="nm">forum_backup_2010_07_30_040000_8125000.bak</span><span class="sz">16 548 KB</span><span class="ty">BAK File</span><span class="dt">30.07.2010 4:00</span></div>
<div class="r"><svg><use href="#bak"/></svg><span class="nm">forum_backup_2010_07_31_040001_5781250.bak</span><span class="sz">17 572 KB</span><span class="ty">BAK File</span><span class="dt">31.07.2010 4:00</span></div>
<div class="r"><svg><use href="#bak"/></svg><span class="nm">master_backup_2010_07_28_194112_0312500.bak</span><span class="sz">3 094 KB</span><span class="ty">BAK File</span><span class="dt">28.07.2010 19:41</span></div>
<div class="r"><svg><use href="#bak"/></svg><span class="nm">master_backup_2010_07_29_030001_0156250.bak</span><span class="sz">3 094 KB</span><span class="ty">BAK File</span><span class="dt">29.07.2010 3:00</span></div>
<div class="r"><svg><use href="#bak"/></svg><span class="nm">master_backup_2010_07_29_040000_7968750.bak</span><span class="sz">3 094 KB</span><span class="ty">BAK File</span><span class="dt">29.07.2010 4:00</span></div>
<div class="r"><svg><use href="#bak"/></svg><span class="nm">master_backup_2010_07_30_030001_7500000.bak</span><span class="sz">3 094 KB</span><span class="ty">BAK File</span><span class="dt">30.07.2010 3:00</span></div>
<div class="r"><svg><use href="#bak"/></svg><span class="nm">master_backup_2010_07_30_040000_8125000.bak</span><span class="sz">3 094 KB</span><span class="ty">BAK File</span><span class="dt">30.07.2010 4:00</span></div>
<div class="r"><svg><use href="#bak"/></svg><span class="nm">master_backup_2010_07_31_030001_4531250.bak</span><span class="sz">3 094 KB</span><span class="ty">BAK File</span><span class="dt">31.07.2010 3:00</span></div>
<div class="r"><svg><use href="#bak"/></svg><span class="nm">master_backup_2010_07_31_040001_5781250.bak</span><span class="sz">3 094 KB</span><span class="ty">BAK File</span><span class="dt">31.07.2010 4:00</span></div>
<div class="r"><svg><use href="#bak"/></svg><span class="nm">model_backup_2010_07_28_194112_0312500.bak</span><span class="sz">1 363 KB</span><span class="ty">BAK File</span><span class="dt">28.07.2010 19:41</span></div>
<div class="r"><svg><use href="#bak"/></svg><span class="nm">model_backup_2010_07_29_030001_0156250.bak</span><span class="sz">1 363 KB</span><span class="ty">BAK File</span><span class="dt">29.07.2010 3:00</span></div>
<div class="r"><svg><use href="#bak"/></svg><span class="nm">model_backup_2010_07_29_040000_8125000.bak</span><span class="sz">1 363 KB</span><span class="ty">BAK File</span><span class="dt">29.07.2010 4:00</span></div>
<div class="r"><svg><use href="#bak"/></svg><span class="nm">model_backup_2010_07_30_030001_7656250.bak</span><span class="sz">1 364 KB</span><span class="ty">BAK File</span><span class="dt">30.07.2010 3:00</span></div>
<div class="r"><svg><use href="#bak"/></svg><span class="nm">model_backup_2010_07_30_040000_8125000.bak</span><span class="sz">1 364 KB</span><span class="ty">BAK File</span><span class="dt">30.07.2010 4:00</span></div>
<div class="r"><svg><use href="#bak"/></svg><span class="nm">model_backup_2010_07_31_030001_4687500.bak</span><span class="sz">1 364 KB</span><span class="ty">BAK File</span><span class="dt">31.07.2010 3:00</span></div>
<div class="r"><svg><use href="#bak"/></svg><span class="nm">model_backup_2010_07_31_040001_5937500.bak</span><span class="sz">1 364 KB</span><span class="ty">BAK File</span><span class="dt">31.07.2010 4:00</span></div>
<div class="r"><svg><use href="#bak"/></svg><span class="nm">msdb_backup_2010_07_29_030001_0156250.bak</span><span class="sz">147 828 KB</span><span class="ty">BAK File</span><span class="dt">29.07.2010 3:00</span></div>
</div>

<div class="ch" style="left:945px;top:99px;width:17px;height:547px"></div>
<div class="btn" style="left:946px;top:99px;width:15px;height:16px"><div class="tri" style="left:3px;top:6px;border-width:0 4px 4px;border-bottom-color:#000"></div></div>
<div class="btn" style="left:945px;top:116px;width:16px;height:375px"></div>
</div>

<!-- TASKBAR EDGE -->
<div style="left:0;top:994px;width:1280px;height:3px;background:#d4d0c8;box-shadow:inset 0 1px #fff"></div>
</body></html>
